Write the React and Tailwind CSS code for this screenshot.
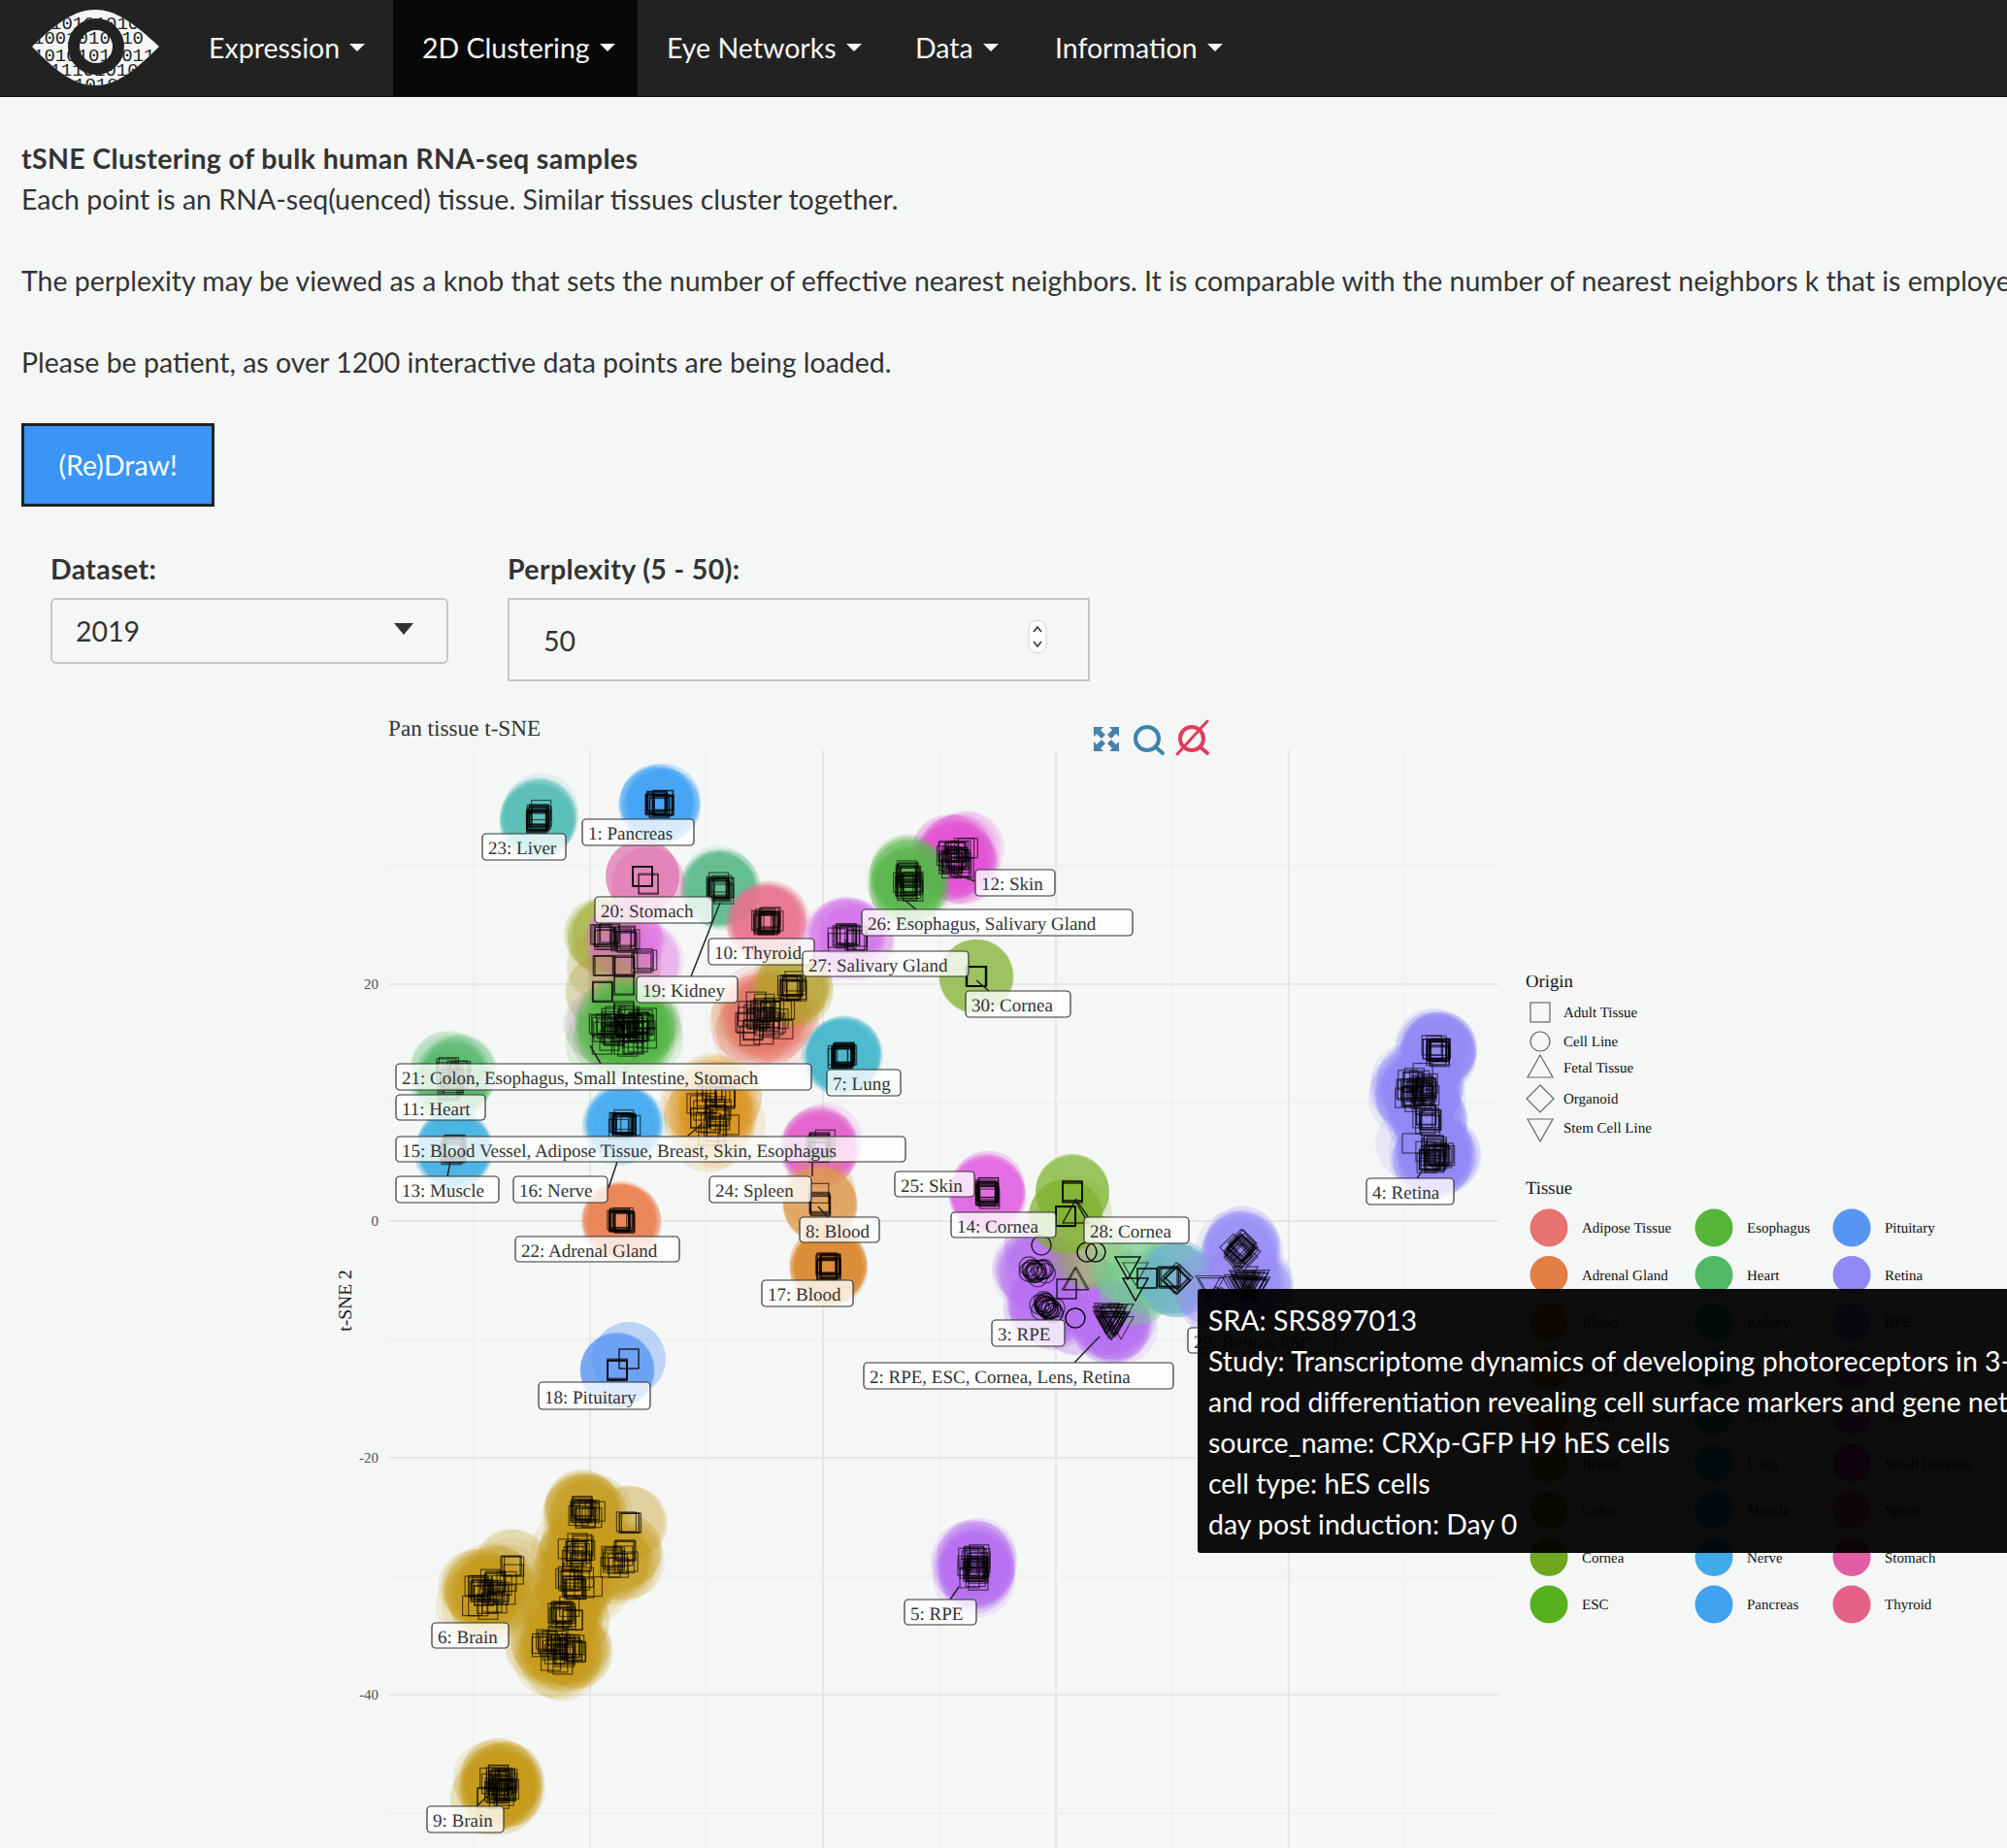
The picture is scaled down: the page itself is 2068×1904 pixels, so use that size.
import React from 'react';

// tiny seeded generator so the scatter stays the same between renders
let seed = 20190;
const rnd = () => {
  seed = (seed + 0x6d2b79f5) | 0;
  let t = Math.imul(seed ^ (seed >>> 15), 1 | seed);
  t = (t + Math.imul(t ^ (t >>> 7), 61 | t)) ^ t;
  return ((t ^ (t >>> 14)) >>> 0) / 4294967296;
};
const spread = () => (rnd() + rnd() - 1) * 2;

const navItems = [
  { label: 'Expression', width: 'w-[220px]' },
  { label: '2D Clustering', width: 'w-[252px]', active: true },
  { label: 'Eye Networks', width: 'w-[256px]' },
  { label: 'Data', width: 'w-[144px]' },
  { label: 'Information', width: 'w-[235px]' },
];

// x, y, spread x, spread y, points, colour, shape, circle opacity
const clusters = [
  [742, 915, 4, 4, 14, '#52b988', 's'],
  [792, 950, 4, 3, 16, '#ea7190', 's'],
  [555, 842, 3.5, 4, 18, '#52c0b6', 's'],
  [679, 828, 3.5, 3.5, 18, '#3fa6f5', 's'],
  [662, 903, 0.3, 0.3, 5, '#e36aa8', 's', 0.2],
  [668, 911, 1, 1, 2, '#e36aa8', 's', 0.2],
  [623, 965, 3, 3, 9, '#99a92e', 's'],
  [645, 968, 3, 3, 8, '#e26ae0', 's'],
  [662, 990, 3, 2, 4, '#e26ae0', 's', 0.14],
  [622, 995, 1, 1, 3, '#b3a63a', 's', 0.1],
  [643, 995, 1, 1, 3, '#e26ae0', 's', 0.1],
  [620, 1022, 2, 1, 3, '#ab9f3a', 's', 0.12],
  [643, 1015, 1, 1, 2, '#ab9f3a', 's', 0.1],
  [622, 1055, 7, 6, 6, '#e9a5dc', 's', 0.12],
  [665, 1050, 9, 7, 4, '#e9a5dc', 's', 0.1],
  [644, 1060, 15, 11, 50, '#57b847', 's'],
  [770, 1050, 7, 8, 5, '#c9a13a', 's', 0.1],
  [788, 1048, 12, 10, 30, '#ec766b', 's'],
  [816, 1016, 5, 4, 12, '#b5a42c', 's'],
  [868, 1087, 3.5, 3, 18, '#45b9cc', 's'],
  [735, 1145, 10, 14, 28, '#d9981a', 's'],
  [470, 1115, 6, 8, 18, '#52b86a', 's'],
  [468, 1184, 3, 4, 16, '#3eb0e4', 's'],
  [644, 1157, 3.5, 3.5, 16, '#3fa9f0', 's'],
  [641, 1258, 3.5, 3.5, 16, '#e77f50', 's'],
  [845, 1182, 3, 4, 16, '#e35bca', 's'],
  [845, 1240, 1, 7, 6, '#e09b4b', 's', 0.28],
  [854, 1305, 2, 3, 16, '#dc8a28', 's'],
  [1018, 1227, 2.5, 5, 16, '#e264e2', 's'],
  [985, 885, 7, 7, 28, '#e055d8', 's'],
  [936, 908, 4, 6, 22, '#59b84e', 's'],
  [873, 967, 6, 3, 14, '#d56be8', 's'],
  [1006, 1006, 0.4, 0.4, 6, '#8ab83f', 's', 0.24],
  [1067, 1310, 6, 4, 14, '#b56ef0', 'c', 0.14],
  [1073, 1283, 0, 0, 2, '#b56ef0', 'c', 0.16],
  [1080, 1347, 5, 4, 18, '#b56ef0', 'c', 0.14],
  [1108, 1358, 0, 0, 3, '#b56ef0', 'c', 0.12],
  [1108, 1320, 1, 1, 2, '#b56ef0', 't', 0.24],
  [1099, 1328, 0, 0, 2, '#b56ef0', 's', 0.16],
  [1147, 1362, 5, 5, 22, '#b56ef0', 'i'],
  [1105, 1228, 0, 1, 5, '#7fb32e', 's', 0.24],
  [1098, 1253, 0.5, 0.5, 6, '#7fb32e', 's', 0.18],
  [1108, 1250, 0, 0, 2, '#7fb32e', 't', 0.1],
  [1120, 1290, 0, 0, 3, '#8cb33a', 'c', 0.12],
  [1129, 1290, 0, 0, 3, '#8cb33a', 'c', 0.12],
  [1162, 1306, 0, 0, 3, '#6ecb90', 'i', 0.16],
  [1170, 1312, 0, 0, 1, '#6ecb90', 'i', 0.2],
  [1170, 1328, 0, 0, 3, '#6ecb90', 'i', 0.16],
  [1182, 1317, 0, 0, 3, '#6ecb90', 's', 0.14],
  [1204, 1316, 2, 1, 5, '#6ecb90', 's', 0.16],
  [1277, 1288, 5, 5, 18, '#9a8cf5', 'd'],
  [1214, 1318, 3, 2, 6, '#6faed0', 'd', 0.2],
  [1283, 1325, 8, 7, 22, '#9a8cf5', 'i'],
  [1245, 1325, 3, 2, 2, '#9a8cf5', 'i', 0.2],
  [1255, 1340, 3, 3, 3, '#9a8cf5', 'd', 0.14],
  [1481, 1083, 4, 3.5, 18, '#9288f5', 's'],
  [1460, 1123, 9, 10, 36, '#9288f5', 's'],
  [1470, 1155, 4, 4, 10, '#9288f5', 's'],
  [1479, 1190, 6, 6, 28, '#9288f5', 's'],
  [1455, 1178, 0, 0, 1, '#9288f5', 's', 0.14],
  [636, 1411, 0.5, 1, 6, '#5a95f3', 's', 0.24],
  [648, 1400, 0, 0, 2, '#5a95f3', 's', 0.2],
  [603, 1558, 6, 4, 16, '#c49a1e', 's'],
  [646, 1568, 3, 3, 4, '#c49a1e', 's', 0.12],
  [595, 1600, 8, 8, 16, '#c49a1e', 's'],
  [636, 1606, 7, 7, 14, '#c49a1e', 's'],
  [595, 1632, 10, 7, 16, '#c49a1e', 's'],
  [580, 1665, 8, 7, 14, '#c49a1e', 's'],
  [577, 1700, 12, 10, 32, '#c49a1e', 's'],
  [503, 1640, 12, 10, 30, '#c49a1e', 's'],
  [530, 1615, 4, 4, 4, '#c49a1e', 's', 0.12],
  [1006, 1613, 6, 10, 28, '#b56ef0', 's'],
  [515, 1840, 8, 7, 34, '#c49a1e', 's'],
];

const points = clusters.flatMap(([x, y, sx, sy, n, color, shape, alpha]) =>
  Array.from({ length: n }, () => ({
    x: x + spread() * sx,
    y: y + spread() * sy,
    color,
    shape,
    alpha: alpha ?? 0.14,
  })),
);

// x0, y0, x1, y1, text
const labels = [
  [497, 859, 583, 886, '23: Liver'],
  [600, 844, 715, 871, '1: Pancreas'],
  [613, 924, 734, 951, '20: Stomach'],
  [1005, 896, 1087, 923, '12: Skin'],
  [888, 937, 1167, 964, '26: Esophagus, Salivary Gland'],
  [730, 967, 839, 994, '10: Thyroid'],
  [827, 980, 998, 1006, '27: Salivary Gland'],
  [656, 1006, 760, 1033, '19: Kidney'],
  [995, 1021, 1103, 1048, '30: Cornea'],
  [408, 1096, 836, 1123, '21: Colon, Esophagus, Small Intestine, Stomach'],
  [852, 1102, 928, 1129, '7: Lung'],
  [408, 1128, 500, 1154, '11: Heart'],
  [408, 1171, 933, 1197, '15: Blood Vessel, Adipose Tissue, Breast, Skin, Esophagus'],
  [408, 1212, 514, 1239, '13: Muscle'],
  [529, 1212, 626, 1239, '16: Nerve'],
  [731, 1212, 836, 1239, '24: Spleen'],
  [922, 1207, 1004, 1233, '25: Skin'],
  [980, 1249, 1088, 1275, '14: Cornea'],
  [824, 1254, 906, 1280, '8: Blood'],
  [531, 1274, 700, 1300, '22: Adrenal Gland'],
  [785, 1319, 879, 1346, '17: Blood'],
  [1022, 1360, 1097, 1387, '3: RPE'],
  [1117, 1254, 1225, 1281, '28: Cornea'],
  [1224, 1368, 1376, 1394, '29: Retina, ESC'],
  [890, 1404, 1209, 1431, '2: RPE, ESC, Cornea, Lens, Retina'],
  [555, 1424, 670, 1452, '18: Pituitary'],
  [1408, 1214, 1498, 1241, '4: Retina'],
  [445, 1672, 524, 1698, '6: Brain'],
  [932, 1648, 1006, 1674, '5: RPE'],
  [440, 1861, 519, 1888, '9: Brain'],
];

const leaders = [
  [712, 1006, 742, 930],
  [627, 1224, 636, 1197],
  [461, 1212, 464, 1197],
  [708, 1171, 724, 1157],
  [837, 1212, 837, 1191],
  [1107, 1404, 1133, 1377],
  [979, 1648, 988, 1635],
  [491, 1861, 503, 1850],
  [1460, 1214, 1468, 1203],
  [1005, 908, 983, 900],
  [1019, 1021, 1006, 1010],
  [944, 937, 933, 928],
  [882, 979, 870, 968],
  [853, 1254, 843, 1243],
  [619, 1096, 608, 1077],
  [1122, 1255, 1108, 1235],
];

const origins = [
  ['s', 1043, 'Adult Tissue'],
  ['c', 1073, 'Cell Line'],
  ['t', 1100, 'Fetal Tissue'],
  ['d', 1132, 'Organoid'],
  ['i', 1164, 'Stem Cell Line'],
];

const tissues = [
  [1596, 1630, [
    ['Adipose Tissue', '#e7726e'], ['Adrenal Gland', '#e37e45'], ['Blood', '#db8c27'], ['Blood Vessel', '#d2951e'], ['Brain', '#c2a01e'],
    ['Breast', '#a8a41e'], ['Colon', '#8ba81e'], ['Cornea', '#6fa81f'], ['ESC', '#57b020'],
  ]],
  [1766, 1800, [
    ['Esophagus', '#54b538'], ['Heart', '#52b867'], ['Kidney', '#52b888'], ['Lens', '#4fbca4'], ['Liver', '#4cbcb8'],
    ['Lung', '#45b8cc'], ['Muscle', '#40b2e0'], ['Nerve', '#40a9e9'], ['Pancreas', '#3fa3f0'],
  ]],
  [1908, 1942, [
    ['Pituitary', '#5795f2'], ['Retina', '#9188f4'], ['RPE', '#b56ef0'], ['Salivary Gland', '#d468e8'], ['Skin', '#e05ee0'],
    ['Small Intestine', '#e45ac8'], ['Spleen', '#e35cb8'], ['Stomach', '#e35da3'], ['Thyroid', '#e4618a'],
  ]],
];

const majorX = [608, 848, 1088, 1328];
const minorX = [488, 728, 968, 1208, 1448];
const majorY = [1014, 1258, 1502, 1746];
const minorY = [892, 1136, 1380, 1624, 1868];

const Marker = ({ shape, x, y, ...rest }) => {
  if (shape === 'c') return <circle cx={x} cy={y} r="10" fill="none" {...rest} />;
  if (shape === 't') return <polygon points={`${x},${y - 13} ${x + 13},${y + 10} ${x - 13},${y + 10}`} fill="none" {...rest} />;
  if (shape === 'i') return <polygon points={`${x - 13},${y - 11} ${x + 13},${y - 11} ${x},${y + 12}`} fill="none" {...rest} />;
  if (shape === 'd') return <polygon points={`${x},${y - 14} ${x + 14},${y} ${x},${y + 14} ${x - 14},${y}`} fill="none" {...rest} />;
  return <rect x={x - 10} y={y - 10} width="20" height="20" fill="none" {...rest} />;
};

const Logo = () => {
  const eye = 'M33 48C60 22 78 10 98 10C118 10 136 22 164 48C136 76 118 88 98 88C78 88 60 76 33 48Z';
  const rows = [
    [72, 9, '01010'],
    [52, 30, '101010101'],
    [34, 45, '1001010010'],
    [34, 63, '10101011011'],
    [40, 78, '011101010'],
    [76, 93, '1010'],
  ];
  return (
    <svg className="absolute left-0 top-0" width="190" height="99">
      <clipPath id="eye-shape">
        <path d={eye} />
      </clipPath>
      <path d={eye} fill="#f5f7f6" />
      <g clipPath="url(#eye-shape)" className="font-['Liberation_Mono',monospace]" fontSize="19" fill="#222">
        {rows.map(([x, y, t]) => (
          <text key={y} x={x} y={y}>{t}</text>
        ))}
      </g>
      <circle cx="99" cy="48" r="23" fill="none" stroke="#222" strokeWidth="12" />
    </svg>
  );
};

const Plot = () => (
  <svg viewBox="0 730 2068 1174" className="block w-[2068px] h-[1174px] font-['Liberation_Serif',serif] [text-rendering:geometricPrecision]">
    {minorX.map((x) => <line key={x} x1={x} x2={x} y1="773" y2="1904" stroke="#eaebeb" strokeWidth="1" />)}
    {majorX.map((x) => <line key={x} x1={x} x2={x} y1="773" y2="1904" stroke="#e6e7e7" strokeWidth="2" />)}
    {minorY.map((y) => <line key={y} x1="400" x2="1544" y1={y} y2={y} stroke="#eaebeb" strokeWidth="1" />)}
    {majorY.map((y) => <line key={y} x1="400" x2="1544" y1={y} y2={y} stroke="#e6e7e7" strokeWidth="2" />)}

    <text x="400" y="758" fontSize="23.2" fill="#333">Pan tissue t-SNE</text>
    {[['20', 1014], ['0', 1258], ['-20', 1502], ['-40', 1746]].map(([t, y]) => (
      <text key={t} x="390" y={y + 5} textAnchor="end" fontSize="15" fill="#4d4d4d">{t}</text>
    ))}
    <text transform="translate(362 1340) rotate(-90)" textAnchor="middle" fontSize="19.5" fill="#222">t-SNE 2</text>

    {/* modebar icons */}
    <g fill="#4682ad">
      <polygon points="1127,749 1137,749 1134,752 1139,757 1135,761 1130,756 1127,759" />
      <polygon points="1153,749 1143,749 1146,752 1141,757 1145,761 1150,756 1153,759" />
      <polygon points="1127,774 1137,774 1134,771 1139,766 1135,762 1130,767 1127,764" />
      <polygon points="1153,774 1143,774 1146,771 1141,766 1145,762 1150,767 1153,764" />
    </g>
    <g fill="none" stroke="#3e82ad" strokeWidth="4" strokeLinecap="round">
      <circle cx="1182" cy="761" r="12" />
      <line x1="1191" y1="770" x2="1198" y2="776" />
    </g>
    <g fill="none" stroke="#de3e5c" strokeWidth="4" strokeLinecap="round">
      <circle cx="1228" cy="761" r="12" />
      <line x1="1237" y1="770" x2="1244" y2="776" />
      <line x1="1244" y1="743" x2="1213" y2="777" strokeWidth="3" />
    </g>

    {points.map((p, i) => (
      <circle key={i} cx={p.x} cy={p.y} r="38" fill={p.color} fillOpacity={p.alpha} />
    ))}
    {points.map((p, i) => (
      <Marker key={i} shape={p.shape} x={p.x} y={p.y} stroke="#000" strokeWidth="1.2" strokeOpacity="0.6" />
    ))}

    {leaders.map(([x1, y1, x2, y2], i) => (
      <line key={i} x1={x1} y1={y1} x2={x2} y2={y2} stroke="#222" strokeWidth="1.5" />
    ))}
    {labels.map(([x0, y0, x1, y1, t]) => (
      <g key={t}>
        <rect x={x0} y={y0} width={x1 - x0} height={y1 - y0} rx="4" fill="#fff" fillOpacity="0.78" stroke="#333" strokeWidth="1.2" />
        <text x={x0 + 6} y={(y0 + y1) / 2 + 7.5} fontSize="19" fill="#333">{t}</text>
      </g>
    ))}

    {/* legend */}
    <text x="1572" y="1017" fontSize="18.7" fill="#111">Origin</text>
    {origins.map(([shape, y, t]) => (
      <g key={t}>
        <Marker shape={shape} x={1587} y={y} stroke="#666" strokeWidth="1.2" />
        <text x="1611" y={shape === 'i' ? 1167 : y + 5} fontSize="15" fill="#111">{t}</text>
      </g>
    ))}
    <text x="1572" y="1230" fontSize="18.7" fill="#111">Tissue</text>
    {tissues.map(([cx, tx, rows]) =>
      rows.map(([t, color], i) => (
        <g key={t}>
          <circle cx={cx} cy={1265 + i * 48.5} r="19.5" fill={color} />
          <text x={tx} y={1270 + i * 48.5} fontSize="15" fill="#111">{t}</text>
        </g>
      )),
    )}
  </svg>
);

export default function App() {
  return (
    <div className="relative w-[2068px] h-[1904px] overflow-hidden bg-[#f5f7f6] text-[#333] font-['Lato',sans-serif] text-[28.5px] leading-[42px]">
      <nav className="relative flex h-[100px] bg-[#222] pl-[185px] border-b border-[#111]">
        <Logo />
        {navItems.map((item) => (
          <div
            key={item.label}
            className={`${item.width} flex items-center pl-[30px] pb-[2px] gap-[10px] text-[#f5f7f6] ${item.active ? 'bg-[#080808]' : ''}`}
          >
            <span>{item.label}</span>
            <span className="w-0 h-0 border-x-[8px] border-t-[8px] border-x-transparent border-t-[#f5f7f6]" />
          </div>
        ))}
      </nav>

      <main className="px-[22px] pt-[42px]">
        <div className="font-bold tracking-[0.37px]">tSNE Clustering of bulk human RNA-seq samples</div>
        <div>Each point is an RNA-seq(uenced) tissue. Similar tissues cluster together.</div>
        <div className="mt-[42px] whitespace-nowrap">
          The perplexity may be viewed as a knob that sets the number of effective nearest neighbors. It is comparable with the number of nearest neighbors k that is employed in many manifold learners.
        </div>
        <div className="mt-[42px]">Please be patient, as over 1200 interactive data points are being loaded.</div>

        <button className="mt-[42px] block w-[199px] h-[86px] bg-[#3a95f5] border-[3px] border-[#222] text-white">
          (Re)Draw!
        </button>

        <div className="mt-[43px] ml-[30px] flex gap-[61px]">
          <div className="w-[410px]">
            <div className="font-bold tracking-[0.37px] mb-[9px]">Dataset:</div>
            <div className="flex items-center justify-between h-[68px] rounded-[6px] border-2 border-[#c6c6c6] pl-[24px] pr-[34px]">
              <span>2019</span>
              <span className="w-0 h-0 border-x-[10px] border-t-[12px] border-x-transparent border-t-[#333] -mt-[4px]" />
            </div>
          </div>
          <div className="w-[600px]">
            <div className="font-bold tracking-[0.37px] mb-[9px]">Perplexity (5 - 50):</div>
            <div className="flex items-center justify-between h-[86px] border-2 border-[#c6c6c6] pl-[35px] pr-[42px]">
              <span className="pt-[2px]">50</span>
              <svg width="20" height="36" viewBox="0 0 20 36" className="-mt-[6px]">
                <rect x="1" y="1" width="18" height="34" rx="9" fill="#fff" stroke="#d0d0d0" />
                <path d="M6 13L10 8L14 13M6 23L10 28L14 23" fill="none" stroke="#333" strokeWidth="1.6" />
              </svg>
            </div>
          </div>
        </div>
      </main>

      <div className="absolute left-0 top-[730px]">
        <Plot />
      </div>

      <div className="absolute left-[1234px] top-[1328px] w-[900px] h-[272px] rounded-[3px] bg-black/95 px-[11px] py-[11px] text-white whitespace-nowrap">
        <div>SRA: SRS897013</div>
        <div>Study: Transcriptome dynamics of developing photoreceptors in 3-dimensional retina cultures</div>
        <div>and rod differentiation revealing cell surface markers and gene networks</div>
        <div>source_name: CRXp-GFP H9 hES cells</div>
        <div>cell type: hES cells</div>
        <div>day post induction: Day 0</div>
      </div>
    </div>
  );
}
